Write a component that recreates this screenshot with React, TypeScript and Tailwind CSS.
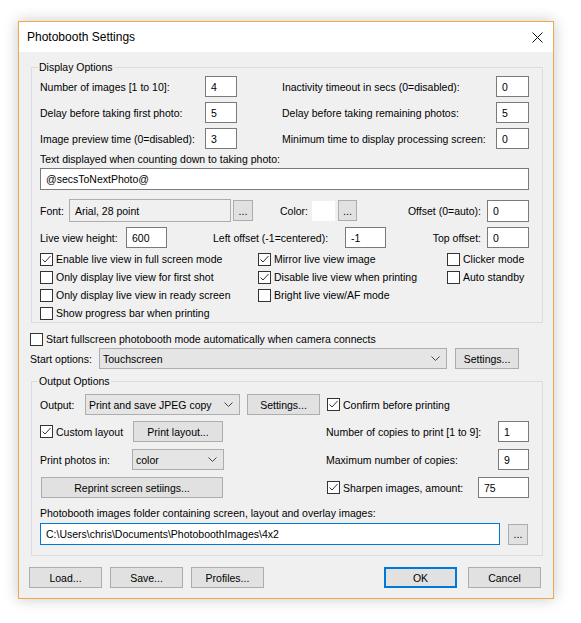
import React from 'react'

type Kids = { children?: React.ReactNode }

function Field({ w, value, h = 'h-[21px]', blue = false }: { w: string; value: string; h?: string; blue?: boolean }) {
  return (
    <div
      className={`${w} ${h} shrink-0 flex items-center bg-white border pl-[5px] whitespace-nowrap overflow-hidden ${
        blue ? 'border-[#0078d7]' : 'border-[#7a7a7a]'
      }`}
    >
      {value}
    </div>
  )
}

function Btn({ w, children, h = 'h-[21px]', primary = false }: Kids & { w: string; h?: string; primary?: boolean }) {
  return (
    <div
      className={`${w} ${h} shrink-0 flex items-center justify-center bg-[#e1e1e1] whitespace-nowrap ${
        primary ? 'border-2 border-[#0078d7]' : 'border border-[#adadad]'
      }`}
    >
      {children}
    </div>
  )
}

function Dots({ w = 'w-[20px]' }: { w?: string }) {
  return (
    <div className={`${w} h-[21px] shrink-0 flex items-end justify-center pb-[4px] bg-[#e1e1e1] border border-[#adadad] leading-none`}>
      ...
    </div>
  )
}

function Chevron() {
  return (
    <svg width="9" height="5" viewBox="0 0 9 5" className="shrink-0">
      <polyline points="0.5,0.5 4.5,4.5 8.5,0.5" fill="none" stroke="#444" strokeWidth="1" />
    </svg>
  )
}

function Combo({ w, value }: { w: string; value: string }) {
  return (
    <div className={`${w} h-[21px] shrink-0 flex items-center justify-between bg-[#e5e5e5] border border-[#adadad] pl-[3px] pr-[6px]`}>
      <span className="whitespace-nowrap">{value}</span>
      <Chevron />
    </div>
  )
}

function Check({ label, checked = false, className = '' }: { label: string; checked?: boolean; className?: string }) {
  return (
    <div className={`flex items-center h-[18px] whitespace-nowrap ${className}`}>
      <div className="w-[13px] h-[13px] shrink-0 bg-white border border-[#333] flex items-center justify-center">
        {checked && (
          <svg width="11" height="11" viewBox="0 0 11 11">
            <polyline points="1.5,5.5 4,8 9.5,2" fill="none" stroke="#333" strokeWidth="1" />
          </svg>
        )}
      </div>
      <span className="ml-[3px]">{label}</span>
    </div>
  )
}

function Group({ label, children, className = '' }: Kids & { label: string; className?: string }) {
  return (
    <div className={`relative ml-[2px] border border-[#dcdcdc] pl-[8px] pr-[13px] ${className}`}>
      <span className="absolute left-[6px] top-[-8px] px-[1px] bg-[#f0f0f0] leading-[14px]">{label}</span>
      {children}
    </div>
  )
}

export default function App() {
  return (
    <div className="min-h-screen bg-white pt-[21px] pl-[18px] text-black font-['Liberation_Sans',Arial,sans-serif] text-[10.5px] leading-[14px]">
      <div className="w-[536px] border border-[#f0a848] bg-[#f0f0f0] shadow-[0_0_14px_rgba(0,0,0,0.22)]">
        {/* title bar */}
        <div className="h-[30px] bg-white flex items-center justify-between pl-[8px] pr-[10px]">
          <span className="text-[12px]">Photobooth Settings</span>
          <svg width="11" height="11" viewBox="0 0 11 11">
            <line x1="0.5" y1="0.5" x2="10.5" y2="10.5" stroke="#111" strokeWidth="1" />
            <line x1="10.5" y1="0.5" x2="0.5" y2="10.5" stroke="#111" strokeWidth="1" />
          </svg>
        </div>

        <div className="pt-[15px] pl-[10px] pr-[10px] pb-[10px]">
          {/* Display options */}
          <Group label="Display Options" className="pt-[8px]">
            {[
              ['Number of images [1 to 10]:', '4', 'Inactivity timeout in secs (0=disabled):', '0'],
              ['Delay before taking first photo:', '5', 'Delay before taking remaining photos:', '5'],
              ['Image preview time (0=disabled):', '3', 'Minimum time to display processing screen:', '0'],
            ].map((r, i) => (
              <div key={i} className={`flex items-center ${i > 0 ? 'mt-[5px]' : ''}`}>
                <span className="w-[165px] shrink-0 whitespace-nowrap">{r[0]}</span>
                <Field w="w-[32px]" value={r[1]} />
                <span className="ml-[45px] flex-1 whitespace-nowrap">{r[2]}</span>
                <Field w="w-[33px]" value={r[3]} />
              </div>
            ))}

            <div className="mt-[2px] leading-[16px]">Text displayed when counting down to taking photo:</div>
            <div className="mt-[1px]">
              <Field w="w-full" h="h-[22px]" value="@secsToNextPhoto@" />
            </div>

            <div className="mt-[9px] flex items-center">
              <span className="w-[29px] shrink-0">Font:</span>
              <div className="w-[162px] h-[23px] shrink-0 flex items-center pl-[5px] border border-[#adadad] bg-[#f0f0f0]">
                Arial, 28 point
              </div>
              <div className="ml-[2px]">
                <Dots />
              </div>
              <span className="ml-[27px] w-[32px] shrink-0">Color:</span>
              <div className="w-[23px] h-[20px] shrink-0 bg-white" />
              <div className="ml-[3px]">
                <Dots w="w-[19px]" />
              </div>
              <span className="flex-1 text-right pr-[6px] whitespace-nowrap">Offset (0=auto):</span>
              <Field w="w-[42px]" h="h-[22px]" value="0" />
            </div>

            <div className="mt-[5px] flex items-center">
              <span className="w-[86px] shrink-0 whitespace-nowrap">Live view height:</span>
              <Field w="w-[41px]" value="600" />
              <span className="ml-[46px] w-[132px] shrink-0 whitespace-nowrap">Left offset (-1=centered):</span>
              <Field w="w-[41px]" value="-1" />
              <span className="flex-1 text-right pr-[6px] whitespace-nowrap">Top offset:</span>
              <Field w="w-[42px]" value="0" />
            </div>

            <div className="mt-[2px] flex">
              <div className="w-[218px] shrink-0 flex flex-col">
                <Check checked label="Enable live view in full screen mode" />
                <Check label="Only display live view for first shot" />
                <Check label="Only display live view in ready screen" />
                <Check label="Show progress bar when printing" />
              </div>
              <div className="w-[189px] shrink-0 flex flex-col">
                <Check checked label="Mirror live view image" />
                <Check checked label="Disable live view when printing" />
                <Check label="Bright live view/AF mode" />
              </div>
              <div className="flex flex-col">
                <Check label="Clicker mode" />
                <Check label="Auto standby" />
              </div>
            </div>
          </Group>

          <Check className="mt-[7px] ml-[1px] h-[17px]" label="Start fullscreen photobooth mode automatically when camera connects" />

          <div className="flex items-center ml-[1px]">
            <span className="w-[69px] shrink-0 whitespace-nowrap">Start options:</span>
            <Combo w="w-[348px]" value="Touchscreen" />
            <div className="ml-[8px]">
              <Btn w="w-[64px]">Settings...</Btn>
            </div>
          </div>

          {/* Output options */}
          <Group label="Output Options" className="mt-[12px] pt-[12px] pb-[10px]">
            <div className="flex items-center">
              <span className="w-[45px] shrink-0">Output:</span>
              <Combo w="w-[155px]" value="Print and save JPEG copy" />
              <div className="ml-[7px]">
                <Btn w="w-[73px]">Settings...</Btn>
              </div>
              <Check className="ml-[7px]" checked label="Confirm before printing" />
            </div>

            <div className="mt-[6px] flex items-center">
              <div className="w-[286px] shrink-0 flex items-center">
                <Check className="w-[93px]" checked label="Custom layout" />
                <Btn w="w-[90px]">Print layout...</Btn>
              </div>
              <span className="flex-1 whitespace-nowrap">Number of copies to print [1 to 9]:</span>
              <Field w="w-[31px]" value="1" />
            </div>

            <div className="mt-[7px] flex items-center">
              <div className="w-[286px] shrink-0 flex items-center">
                <span className="w-[92px] shrink-0">Print photos in:</span>
                <Combo w="w-[92px]" value="color" />
              </div>
              <span className="flex-1 whitespace-nowrap">Maximum number of copies:</span>
              <Field w="w-[31px]" value="9" />
            </div>

            <div className="mt-[7px] flex items-center">
              <div className="w-[286px] shrink-0 flex items-center pl-[1px]">
                <Btn w="w-[182px]">Reprint screen setiings...</Btn>
              </div>
              <Check className="ml-[1px] flex-1" checked label="Sharpen images, amount:" />
              <Field w="w-[51px]" value="75" />
            </div>

            <div className="mt-[7px] leading-[16px]">Photobooth images folder containing screen, layout and overlay images:</div>
            <div className="mt-[2px] flex items-center">
              <Field w="w-[460px]" h="h-[22px]" blue value={'C:\\Users\\chris\\Documents\\PhotoboothImages\\4x2'} />
              <div className="ml-[8px]">
                <Dots />
              </div>
            </div>
          </Group>

          {/* dialog buttons */}
          <div className="mt-[11px] mr-[2px] flex items-center">
            <Btn w="w-[73px]">Load...</Btn>
            <div className="ml-[8px]">
              <Btn w="w-[73px]">Save...</Btn>
            </div>
            <div className="ml-[8px]">
              <Btn w="w-[73px]">Profiles...</Btn>
            </div>
            <div className="flex-1" />
            <Btn w="w-[73px]" primary>
              OK
            </Btn>
            <div className="ml-[11px]">
              <Btn w="w-[73px]">Cancel</Btn>
            </div>
          </div>
        </div>
      </div>
    </div>
  )
}
